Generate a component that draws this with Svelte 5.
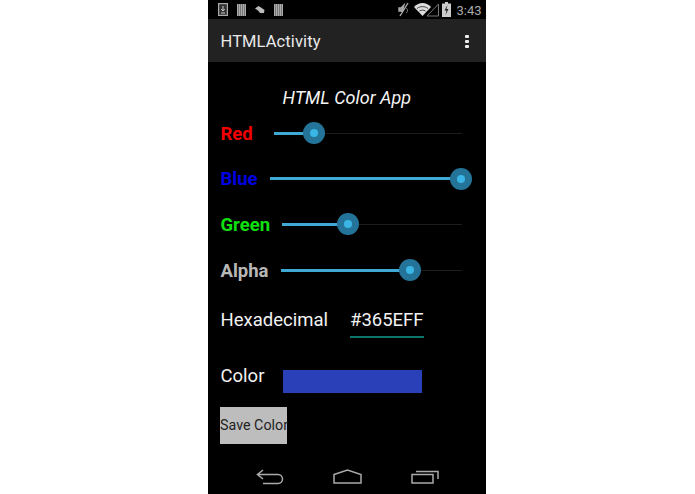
<script>
  const sliders = [
    { name: 'Red', color: '#f00000', start: 274, thumb: 314 },
    { name: 'Blue', color: '#0000e0', start: 270, thumb: 461 },
    { name: 'Green', color: '#10e010', start: 282, thumb: 348 },
    { name: 'Alpha', color: '#b8b8b8', start: 281, thumb: 410 }
  ];
</script>

<div class="stage">
  <main class="phone">
    <header class="status">
      <div class="notify">
        <svg width="10" height="13" viewBox="0 0 10 13"><rect x=".6" y=".6" width="8.8" height="11.8" fill="#333" stroke="#aaa" stroke-width="1.2"/><path d="M5 3v4.500M3.200 6 5 8l1.800-2M3 10h4" stroke="#ccc" fill="none"/></svg>
        <span class="stripes"></span>
        <svg width="10" height="8" viewBox="0 0 10 8"><path d="M0 2.500 3.500 0 6 1.500 9.500 4 9 7 5 7 3 4.500Z" fill="#bbb"/></svg>
        <span class="stripes"></span>
      </div>
      <div class="system">
        <svg width="13" height="15" viewBox="0 0 13 15"><path d="M6 3 3 6H1v3h2l1 1zM10 1 2 14" stroke="#aaa" stroke-width="1.400" fill="#999"/><path d="M8 6c2 1 2 4 0 5" stroke="#888" fill="none"/></svg>
        <svg class="wifi" width="25" height="15" viewBox="0 0 25 15"><path d="M0 5C5-.5 12-.5 17 5L8.500 14Z" fill="#ddd"/><path d="M3 6.500c3-2.500 8-2.500 11 0" stroke="#444" fill="none"/><path d="M5.500 9c2-1.200 4-1.200 6 0" stroke="#444" fill="none"/><path d="M24.500 2V14H13Z" fill="none" stroke="#777"/></svg>
        <svg class="battery" width="9" height="15" viewBox="0 0 9 15"><path d="M3 0h3v1.500H9V15H0V1.500h3z" fill="#ccc"/><path d="M5.500 3 2.500 8.500h2l-1 4.500 3-6h-2z" fill="#222"/></svg>
        <span class="clock">3:43</span>
      </div>
    </header>

    <div class="actionbar">
      <h1>HTMLActivity</h1>
      <div class="overflow"><i></i><i></i><i></i></div>
    </div>

    <section class="content">
      <h2>HTML Color App</h2>

      {#each sliders as s}
        <div class="row">
          <span class="label" style="color:{s.color};width:{s.start - 220.500}px">{s.name}</span>
          <div class="track">
            <div class="fill" style="width:{s.thumb - s.start}px"></div>
            <div class="thumb" style="left:{s.thumb - s.start}px"><b></b></div>
          </div>
        </div>
      {/each}

      <div class="hex">
        <span>Hexadecimal</span>
        <span class="field">#365EFF</span>
      </div>

      <div class="color">
        <span>Color</span>
        <div class="swatch"></div>
      </div>

      <button>Save Color</button>
    </section>

    <nav>
      <svg width="28" height="16" viewBox="0 0 28 16"><path d="M7 1 1.500 5.500 7 10M1.500 5.500H22c6 0 6 9 0 9H7" fill="none" stroke="#aaa" stroke-width="1.500"/></svg>
      <svg width="29" height="15" viewBox="0 0 29 15"><path d="M1 5.500 14.500 1 28 5.500V14H1Z" fill="none" stroke="#aaa" stroke-width="1.500"/></svg>
      <svg width="28" height="15" viewBox="0 0 28 15"><path d="M1 5.500H22V14H1ZM5 2.500H27V10" fill="none" stroke="#aaa" stroke-width="1.500"/></svg>
    </nav>
  </main>
</div>

<style>
  :global(body) { margin: 0; background: #fff; }
  .stage { display: flex; justify-content: center; padding-right: 1px; height: 494px; overflow: hidden; }
  .phone { width: 278px; height: 494px; background: #000; display: flex; flex-direction: column; font-family: Roboto, sans-serif; color: #f2f2f2; }

  .status { height: 19px; display: flex; justify-content: space-between; align-items: center; padding: 0 4.500px 0 10px; box-sizing: border-box; }
  .notify, .system { display: flex; align-items: center; }
  .notify { gap: 9px; }
  .stripes { width: 9px; height: 12px; background: repeating-linear-gradient(90deg, #aaa 0 1px, #777 1px 2px); }
  .system { gap: 3px; }
  .battery { margin-right: 2px; }
  .clock { font-size: 13px; color: #aaa; padding-top: 1px; }

  .actionbar { height: 43px; background: #222; display: flex; align-items: center; justify-content: space-between; padding: 1px 17px 0 12.500px; box-sizing: border-box; }
  h1 { margin: 0; font-size: 16.500px; font-weight: 400; color: #e8e8e8; letter-spacing: .1px; }
  .overflow { display: flex; flex-direction: column; gap: 2px; }
  .overflow i { width: 4px; height: 3px; background: #eee; border-radius: 1px; }

  .content { flex: 1; display: flex; flex-direction: column; padding: 0 24px 0 12.500px; min-height: 0; }
  h2 { margin: 25px 0 0 11px; height: 22px; line-height: 22px; font-size: 18px; font-weight: 400; font-style: italic; text-align: center; color: #f4f4f4; }

  .row { height: 45.600px; display: flex; align-items: center; }
  h2 + .row { margin-top: 1.500px; }
  .label { flex: none; font-size: 18.500px; font-weight: 700; padding-top: 1px; }
  .track { flex: 1; height: 1px; background: #1c1c1c; position: relative; }
  .fill { position: absolute; left: 0; top: -1px; height: 3px; background: #3fa9d4; }
  .thumb { position: absolute; top: .5px; width: 22px; height: 22px; border-radius: 50%; background: #24749a; transform: translate(-50%, -50%); display: flex; align-items: center; justify-content: center; }
  .thumb b { width: 8px; height: 8px; border-radius: 50%; background: #3ab6e6; }

  .hex { display: flex; margin-top: 13.500px; font-size: 18.500px; }
  .hex > span:first-child { width: 129.500px; line-height: 28px; }
  .field { width: 74px; height: 30px; line-height: 28px; border-bottom: 2px solid #0c7468; white-space: nowrap; }
  .color { display: flex; align-items: flex-start; margin-top: 25px; font-size: 18.500px; line-height: 26px; }
  .color span { width: 62.500px; }
  .swatch { width: 139px; height: 23px; margin-top: 6.500px; background: #2a40b8; }

  button { margin: 14px 0 0 -.5px; width: 67px; height: 37px; padding: 0; border: 0; background: #bdbdbd; color: #222; font: 14.300px Roboto, sans-serif; white-space: nowrap; }

  nav { height: 31px; display: flex; align-items: center; justify-content: flex-start; gap: 49px; padding: 0 0 4px 48px; box-sizing: border-box; flex: none; }
</style>
